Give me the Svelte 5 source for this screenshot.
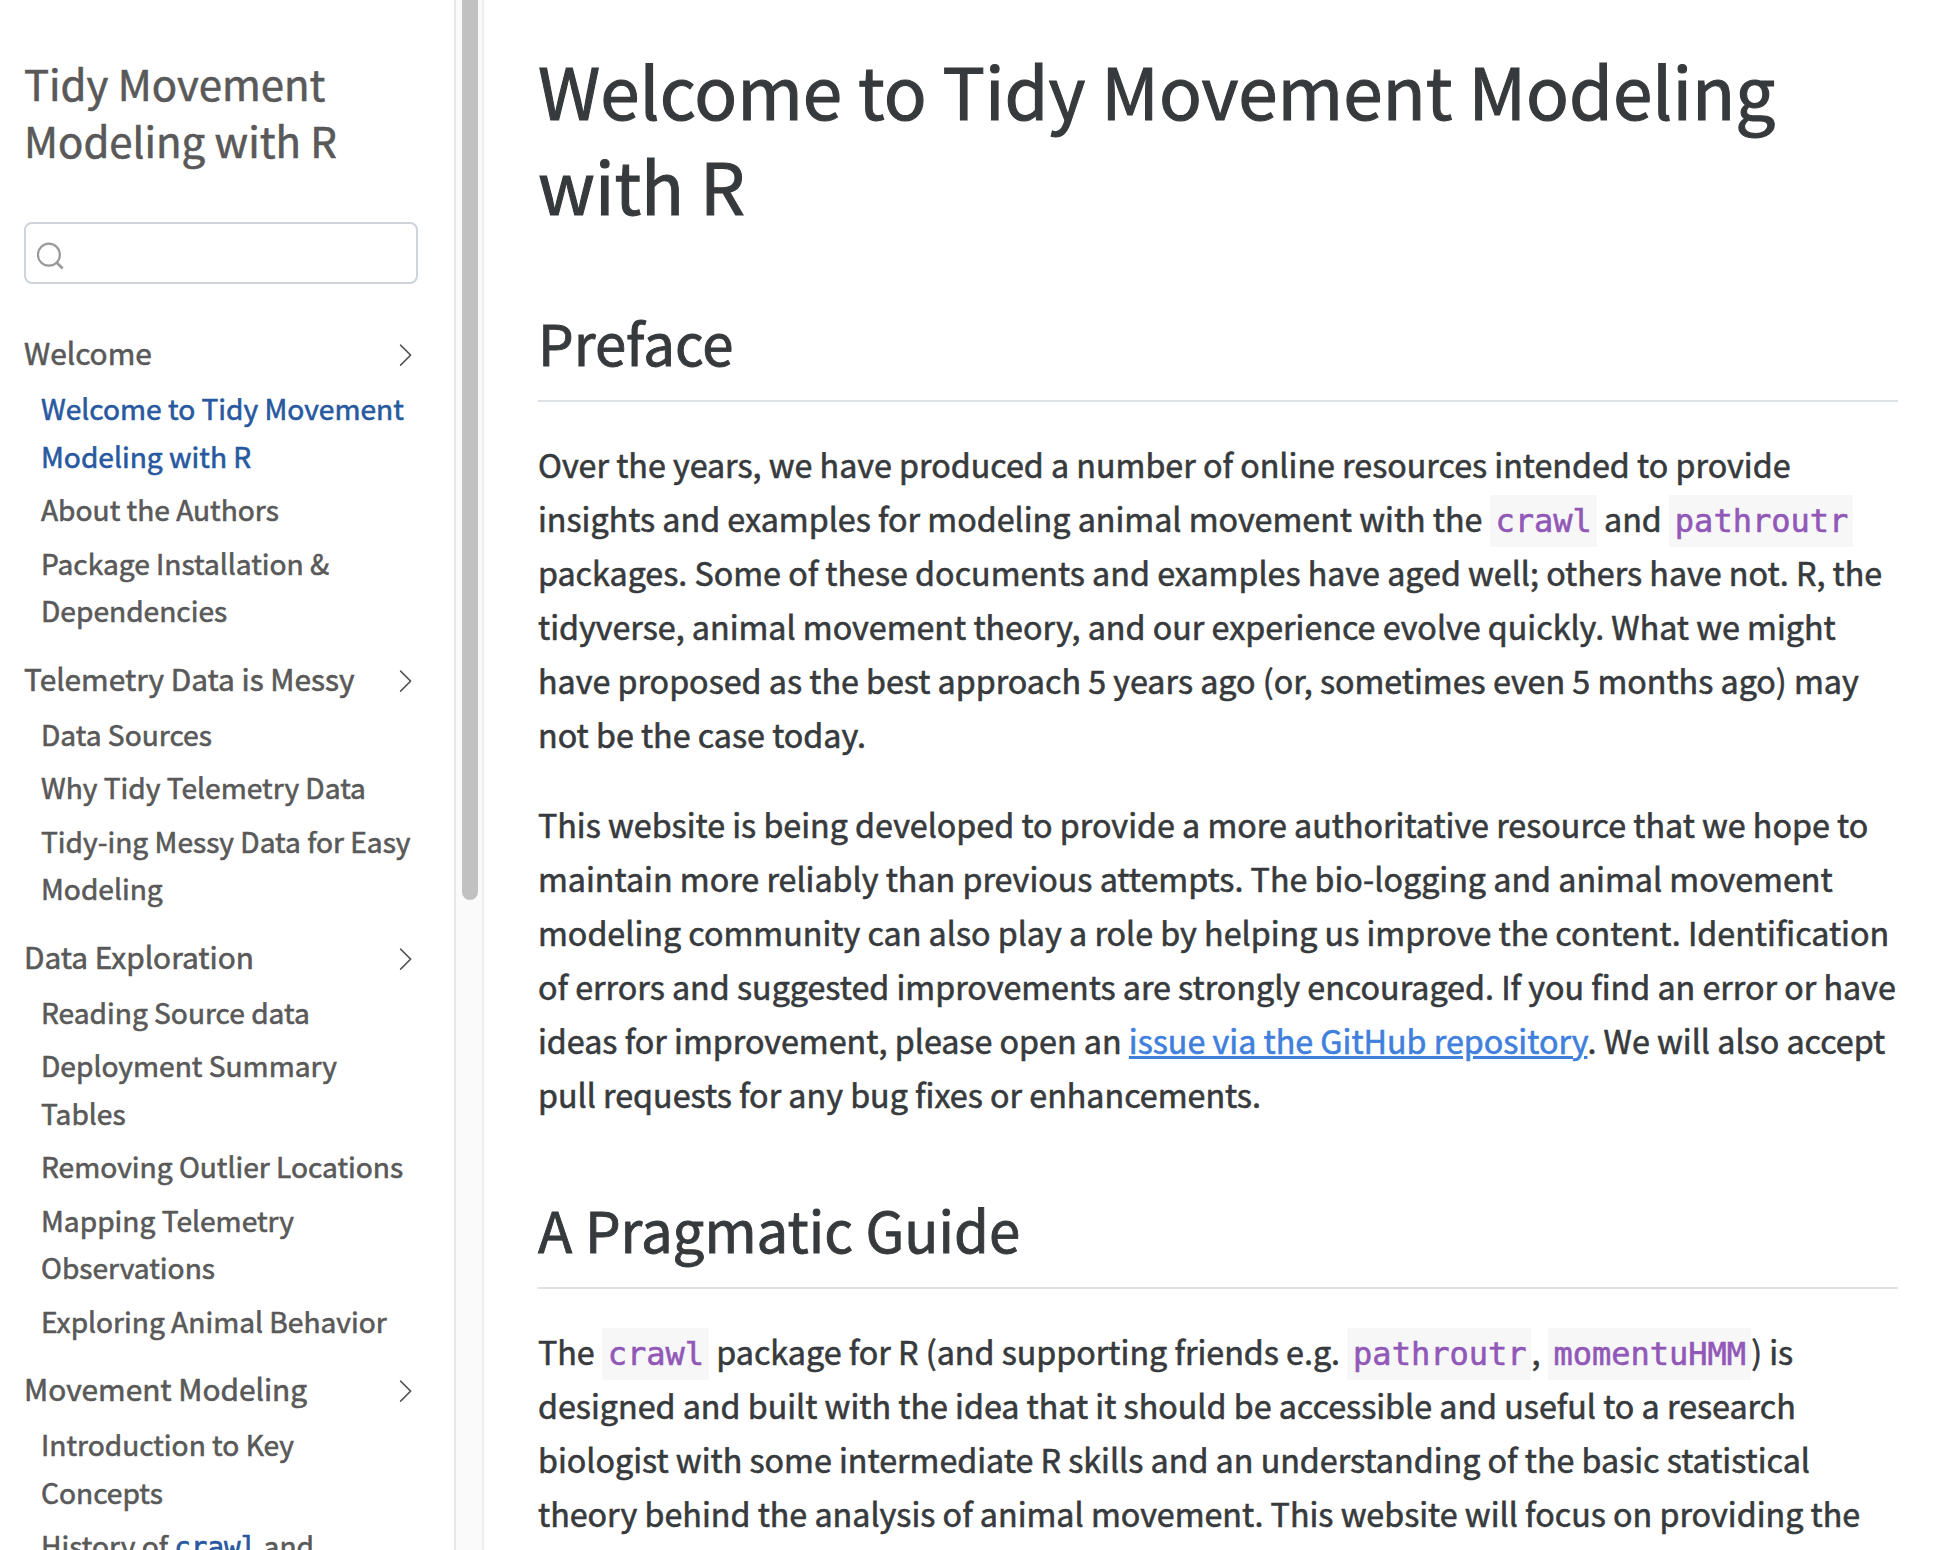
<script>
  const sections = [
    { title: 'Welcome', items: [['Welcome to Tidy Movement', 'Modeling with R'], ['About the Authors'], ['Package Installation &', 'Dependencies']] },
    { title: 'Telemetry Data is Messy', items: [['Data Sources'], ['Why Tidy Telemetry Data'], ['Tidy-ing Messy Data for Easy', 'Modeling']] },
    { title: 'Data Exploration', items: [['Reading Source data'], ['Deployment Summary', 'Tables'], ['Removing Outlier Locations'], ['Mapping Telemetry', 'Observations'], ['Exploring Animal Behavior']] },
    { title: 'Movement Modeling', items: [['Introduction to Key', 'Concepts']] },
  ];
</script>

<div class="page">
  <aside>
    <div class="title">Tidy Movement<br />Modeling with R</div>
    <div class="search">
      <svg width="28" height="28" viewBox="0 0 28 28" fill="none" stroke="#999" stroke-width="2.2"><circle cx="11.9" cy="12.7" r="11" /><path d="M19.6 20.4l6 6" stroke-width="2.8" /></svg>
    </div>
    <nav>
      {#each sections as s, si}
        <section>
          <div class="head"><span>{s.title}</span>
            <svg width="14" height="22" viewBox="0 0 14 22" fill="none" stroke="#555" stroke-width="1.5" stroke-linecap="round" stroke-linejoin="round"><path d="M1.6 1.1l10 10-10 10" /></svg>
          </div>
          {#each s.items as lines, i}
            <div class="item" class:active={si === 0 && i === 0}>
              {#each lines as line}<div>{line}</div>{/each}
            </div>
          {/each}
          {#if si === 3}<div class="item"><div>History of <code>crawl</code> and</div></div>{/if}
        </section>
      {/each}
    </nav>
  </aside>
  <div class="track"><div class="thumb"></div></div>
  <main>
    <h1>Welcome to Tidy Movement Modeling<br />with R</h1>
    <h2 class="first">Preface</h2>
    <p class="lead">
      Over the years, we have produced a number of online resources intended to provide<br />
      insights and examples for modeling animal movement with the <code>crawl</code> and <code>pathroutr</code><br />
      packages. Some of these documents and examples have aged well; others have not. R, the<br />
      tidyverse, animal movement theory, and our experience evolve quickly. What we might<br />
      have proposed as the best approach 5 years ago (or, sometimes even 5 months ago) may<br />
      not be the case today.
    </p>
    <p>
      This website is being developed to provide a more authoritative resource that we hope to<br />
      maintain more reliably than previous attempts. The bio-logging and animal movement<br />
      modeling community can also play a role by helping us improve the content. Identification<br />
      of errors and suggested improvements are strongly encouraged. If you find an error or have<br />
      ideas for improvement, please open an <a href="#issues">issue via the GitHub repository</a>. We will also accept<br />
      pull requests for any bug fixes or enhancements.
    </p>
    <h2>A Pragmatic Guide</h2>
    <p class="lead">
      The <code>crawl</code> package for R (and supporting friends e.g. <code>pathroutr</code>, <code>momentuHMM</code>) is<br />
      designed and built with the idea that it should be accessible and useful to a research<br />
      biologist with some intermediate R skills and an understanding of the basic statistical<br />
      theory behind the analysis of animal movement. This website will focus on providing the
    </p>
  </main>
</div>

<style>
  :global(body) { overflow: hidden; background: #fff; }
  .page { display: flex; height: 1550px; overflow: hidden; font-family: "Noto Sans CJK SC", "Noto Sans", sans-serif; color: #373a3c; white-space: nowrap; -webkit-text-stroke: 0.6px; }
  aside { box-sizing: border-box; flex: none; width: 454px; padding: 54px 36px 0 24px; color: #595959; }
  .title { font-size: 41.9px; line-height: 57px; }
  .search { box-sizing: border-box; height: 62px; width: 394px; margin-top: 54px; border: 2px solid #ced4da; border-radius: 8px; padding: 18px 0 0 11px; }
  nav { margin-top: 47px; }
  section { margin-bottom: 23px; }
  .head { display: flex; justify-content: space-between; align-items: flex-start; height: 48px; margin: 0 5px 5px 0; font-size: 29.8px; line-height: 42.4px; }
  .head svg { margin-top: 13px; }
  .item { margin: 0 0 6px 17px; font-size: 28.15px; line-height: 47.5px; }
  .active { color: #28599f; }
  .track { box-sizing: border-box; flex: none; width: 30px; border-left: 2px solid #e8e8e8; border-right: 2px solid #ededed; background: #fafafa; }
  .thumb { width: 16px; height: 900px; margin-left: 6px; border-radius: 0 0 8px 8px; background: #c1c1c1; }
  main { width: 1360px; padding: 42px 0 0 54px; }
  h1 { margin: 0; font-size: 70.93px; line-height: 95px; font-weight: 400; -webkit-text-stroke-width: 1.1px; }
  h2 { margin: 69px 0 0; height: 97px; border-bottom: 2px solid #dee2e6; font-size: 56.35px; line-height: 77px; font-weight: 400; -webkit-text-stroke-width: 0.9px; }
  .first { margin-top: 71px; }
  p { margin: 36px 0 0; font-size: 32.24px; line-height: 54px; }
  .lead { margin-top: 35px; }
  code { font-family: "DejaVu Sans Mono", monospace; font-size: 27.6px; line-height: 0; color: #28599f; }
  p code { color: #9158b8; background: #f7f7f7; padding: 7px 5px 7px 5.8px; font-size: 32px; }
  a { color: #3f80dd; text-decoration: underline; }
</style>
